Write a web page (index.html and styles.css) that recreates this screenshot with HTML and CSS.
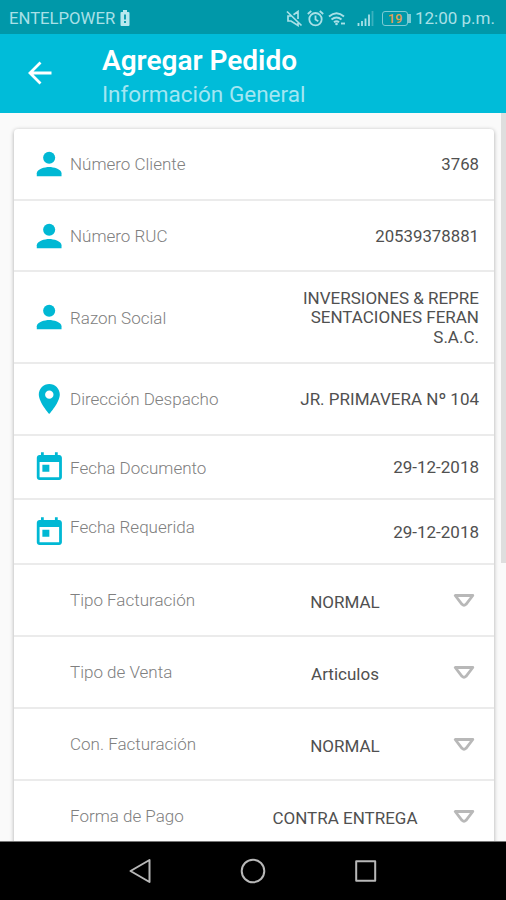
FILE: index.html
```
<!DOCTYPE html>
<html lang="es">
<head>
    <meta charset="UTF-8">
    <title>Agregar Pedido</title>
    <link rel="stylesheet" href="styles.css">
</head>
<body>
<svg class="sprite">
    <symbol id="person" viewBox="2.200 2.300 19.400 19.400">
        <circle cx="12" cy="7.900" r="3.900"/>
        <path d="M12 14c-2.670 0-8 1.340-8 4v2h16v-2c0-2.660-5.330-4-8-4z"/>
    </symbol>
    <symbol id="place" viewBox="1.800 2 20 20">
        <path d="M12 2C8.130 2 5 5.130 5 9c0 5.250 7 13 7 13s7-7.750 7-13c0-3.870-3.130-7-7-7zm0 9.900a2.800 2.800 0 1 1 0-5.600 2.800 2.800 0 0 1 0 5.600z"/>
    </symbol>
    <symbol id="calendar" viewBox="1 0.900 21.500 21.500">
        <path d="M19 3h-1V1h-2v2H8V1H6v2H5c-1.110 0-1.990.9-1.990 2L3 19c0 1.100.89 2 2 2h14c1.100 0 2-.9 2-2V5c0-1.100-.9-2-2-2zm0 16H5V8h14v11zM7 10h5v5H7z"/>
    </symbol>
    <symbol id="arrow" viewBox="0 0 22 16">
        <path d="M2.200 2.500h17.600L13 11.300q-2 2-4 0z" fill="none" stroke="#b8b8b8" stroke-width="2.800" stroke-linejoin="round"/>
    </symbol>
</svg>

<div class="status">
    <span class="carrier">ENTELPOWER</span>
    <svg class="sim" width="10" height="16" viewBox="0 0 10 16">
        <path d="M3 0h4v2h1.500q1 0 1 1v12q0 1-1 1h-7q-1 0-1-1V3q0-1 1-1H3z" fill="#b9e8ee"/>
        <path d="M5 4.500v5M5 11v2" stroke="#0098a9" stroke-width="1.800"/>
    </svg>
    <div class="status-icons">
        <svg width="17" height="17" viewBox="0 0 17 17" fill="none" stroke="#a9e0e7" stroke-width="1.700">
            <path d="M1 1.500l14.500 14M5 6H2v5h3l7 4.500V13M7.500 4.800L12 1.500v7.500"/>
        </svg>
        <svg width="17" height="17" viewBox="0 0 17 17" fill="none" stroke="#a9e0e7" stroke-width="1.800">
            <circle cx="8.500" cy="9.200" r="6.200"/>
            <path d="M8.500 5.500v4l2.800 1.700M.8 4l3.500-3M16.200 4l-3.500-3"/>
        </svg>
        <svg class="wifi" width="18" height="17" viewBox="0 0 18 17" fill="none" stroke="#a9e0e7" stroke-width="1.900">
            <path d="M1 6.500q7.500-6.500 15 0M3.500 9.500q5-4.200 10 0M6 12.300q2.500-2.200 5 0"/>
            <circle cx="8.500" cy="14" r="1.300" fill="#a9e0e7" stroke="none"/>
            <path d="M13 13.500h4"/>
        </svg>
        <svg class="signal" width="17" height="17" viewBox="0 0 17 17" stroke="#a9e0e7" stroke-width="1.800">
            <path d="M1.500 16v-3M5 16v-5M8.500 16V8.500M12 16V4.500"/>
            <path d="M15.500 16V1" opacity=".35"/>
        </svg>
        <div class="battery">19</div>
    </div>
    <span class="clock">12:00 p.m.</span>
</div>

<div class="toolbar">
    <svg class="back" width="24" height="24" viewBox="0 0 24 24" fill="none" stroke="#fff" stroke-width="2.800">
        <path d="M23.500 12H2.500M12.500 1.500L2 12l10.500 10.500"/>
    </svg>
    <div>
        <h1>Agregar Pedido</h1>
        <h2>Información General</h2>
    </div>
</div>

<div class="content">
    <div class="card">
        <div class="row">
            <svg class="icon"><use href="#person"/></svg>
            <span class="label">Número Cliente</span>
            <span class="value num">3768</span>
        </div>
        <div class="row short">
            <svg class="icon"><use href="#person"/></svg>
            <span class="label">Número RUC</span>
            <span class="value num">20539378881</span>
        </div>
        <div class="row tall">
            <svg class="icon"><use href="#person"/></svg>
            <span class="label">Razon Social</span>
            <span class="value">INVERSIONES &amp; REPRE<br>SENTACIONES FERAN<br>S.A.C.</span>
        </div>
        <div class="row">
            <svg class="icon"><use href="#place"/></svg>
            <span class="label">Dirección Despacho</span>
            <span class="value">JR. PRIMAVERA Nº 104</span>
        </div>
        <div class="row date">
            <svg class="icon"><use href="#calendar"/></svg>
            <span class="label">Fecha Documento</span>
            <span class="value">29-12-2018</span>
        </div>
        <div class="row date required">
            <svg class="icon"><use href="#calendar"/></svg>
            <span class="label">Fecha Requerida</span>
            <span class="value">29-12-2018</span>
        </div>
        <div class="row select">
            <span class="label">Tipo Facturación</span>
            <span class="option">NORMAL</span>
            <svg class="arrow"><use href="#arrow"/></svg>
        </div>
        <div class="row select">
            <span class="label">Tipo de Venta</span>
            <span class="option">Articulos</span>
            <svg class="arrow"><use href="#arrow"/></svg>
        </div>
        <div class="row select">
            <span class="label">Con. Facturación</span>
            <span class="option">NORMAL</span>
            <svg class="arrow"><use href="#arrow"/></svg>
        </div>
        <div class="row select">
            <span class="label">Forma de Pago</span>
            <span class="option">CONTRA ENTREGA</span>
            <svg class="arrow"><use href="#arrow"/></svg>
        </div>
    </div>
    <div class="scrollbar"></div>
</div>

<div class="navbar">
    <svg width="24" height="26" viewBox="0 0 24 26"><path d="M21.500 2v22L2.500 13z"/></svg>
    <svg width="26" height="26" viewBox="0 0 26 26"><circle cx="13" cy="13" r="11.300"/></svg>
    <svg width="24" height="24" viewBox="0 0 24 24"><rect x="2.200" y="2.200" width="19" height="19.500"/></svg>
</div>
</body>
</html>
```
FILE: styles.css
```
* {
    box-sizing: border-box;
}
body {
    margin: 0;
    width: 506px;
    height: 900px;
    display: flex;
    flex-direction: column;
    overflow: hidden;
    background: #fafafa;
    font-family: Roboto, "Liberation Sans", sans-serif;
}
.sprite {
    display: none;
}
.status {
    height: 34px;
    flex: none;
    display: flex;
    align-items: center;
    padding: 2px 11px 0 9px;
    background: #0098a9;
    color: #a9e0e7;
    font-size: 16.700px;
    white-space: nowrap;
}
.sim {
    margin-left: 5px;
}
.status-icons {
    display: flex;
    align-items: center;
    margin-left: auto;
    gap: 4px;
}
.signal {
    margin-left: 7px;
}
.battery {
    position: relative;
    width: 26px;
    height: 15px;
    margin: 0 3px 0 4px;
    border: 1.500px solid #7ccbd4;
    border-radius: 3px;
    color: #e0a04e;
    font-size: 13px;
    font-weight: 500;
    line-height: 13px;
    text-align: center;
}
.battery::after {
    content: "";
    position: absolute;
    right: -4px;
    top: 2px;
    width: 3px;
    height: 9px;
    background: #7ccbd4;
}
.clock {
    margin-left: 4px;
    font-size: 17px;
}
.toolbar {
    height: 79px;
    flex: none;
    display: flex;
    align-items: flex-start;
    padding: 10px 0 0 28px;
    background: #00bcd9;
}
.back {
    margin: 17px 50px 0 0;
}
h1, h2 {
    margin: 0;
    white-space: nowrap;
}
h1 {
    color: #fff;
    font-size: 28px;
    font-weight: 600;
    line-height: 34px;
}
h2 {
    color: #a3e6f2;
    font-size: 22.500px;
    font-weight: 400;
    line-height: 32px;
}
.content {
    flex: 1;
    position: relative;
    overflow: hidden;
    padding: 16px 12px 0 14px;
}
.card {
    width: 480px;
    border-radius: 4px;
    background: #fff;
    box-shadow: 0 1px 4px rgba(0, 0, 0, .32);
}
.row {
    display: flex;
    align-items: center;
    height: 72px;
    padding: 0 15px 0 20px;
    border-bottom: 2px solid #ebebeb;
    color: #505050;
    font-size: 17px;
}
.short {
    height: 71px;
}
.tall {
    height: 92px;
}
.date {
    height: 64px;
}
.required {
    height: 65px;
}
.icon {
    width: 30px;
    height: 30px;
    flex: none;
    margin-right: 6px;
    fill: #00b8d4;
}
.label {
    color: #808080;
    font-weight: 300;
    white-space: nowrap;
}
.short .label,
.tall .label,
.date .label {
    padding-top: 1px;
}
.required .label {
    padding-bottom: 11px;
}
.value {
    margin-left: auto;
    padding-top: 2px;
    line-height: 19.500px;
    text-align: right;
    white-space: nowrap;
}
.num {
    font-size: 16.800px;
}
.select {
    padding-left: 56px;
}
.select .label {
    width: 145px;
}
.option {
    flex: 1;
    padding: 3px 0 0 22px;
    text-align: center;
}
.arrow {
    width: 22px;
    height: 16px;
    margin: 1px 4px 0 0;
}
.scrollbar {
    position: absolute;
    top: 0;
    right: 0;
    width: 5px;
    height: 450px;
    background: #dedede;
}
.navbar {
    height: 59px;
    flex: none;
    display: flex;
    align-items: center;
    justify-content: center;
    gap: 88px;
    border-top: 1px solid #777;
    background: #000;
}
.navbar svg {
    fill: none;
    stroke: #b8b8b8;
    stroke-width: 2;
    stroke-linejoin: round;
}
```
